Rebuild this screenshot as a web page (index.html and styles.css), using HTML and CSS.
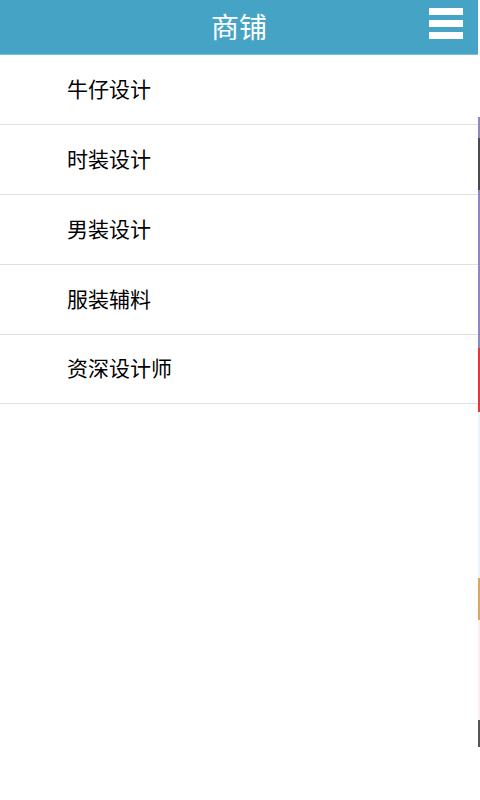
FILE: index.html
```html
<!DOCTYPE html>
<html lang="zh-CN">
<head>
  <meta charset="UTF-8">
  <meta name="viewport" content="width=device-width, initial-scale=1.0">
  <title>商铺</title>
  <link rel="stylesheet" href="styles.css">
</head>
<body>
<div class="page">
  <div class="main">
    <div class="header">
      <h1>商铺</h1>
      <div class="menu-btn">
        <span></span>
        <span></span>
        <span></span>
      </div>
    </div>
    <ul class="list">
      <li>牛仔设计</li>
      <li>时装设计</li>
      <li>男装设计</li>
      <li>服装辅料</li>
      <li>资深设计师</li>
    </ul>
  </div>
  <div class="edge">
    <div class="seg seg-white"></div>
    <div class="seg seg-purple1"></div>
    <div class="seg seg-dark1"></div>
    <div class="seg seg-purple2"></div>
    <div class="seg seg-red"></div>
    <div class="seg seg-sky"></div>
    <div class="seg seg-gold"></div>
    <div class="seg seg-pink"></div>
    <div class="seg seg-dark2"></div>
    <div class="seg seg-rest"></div>
  </div>
</div>
</body>
</html>
```

FILE: styles.css
```css
body {
  margin: 0;
  font-family: "Noto Sans CJK SC", "Noto Sans", sans-serif;
  background: #fff;
}
.page {
  display: flex;
  height: 800px;
}
.main {
  flex: 1;
}
.header {
  height: 54px;
  background-color: #45a4c6;
  border-bottom: 1px solid #7cc0d8;
  display: flex;
  align-items: center;
  justify-content: center;
  position: relative;
}
.header h1 {
  margin: 0 0 3px;
  color: #fff;
  font-size: 28px;
  font-weight: normal;
  line-height: 1;
}
.menu-btn {
  position: absolute;
  right: 15px;
  top: 8px;
  display: flex;
  flex-direction: column;
  gap: 5px;
}
.menu-btn span {
  display: block;
  width: 34px;
  height: 7px;
  background: #fff;
}
.list {
  list-style: none;
  margin: 0;
  padding: 0;
}
.list li {
  height: 66px;
  padding-bottom: 3px;
  border-bottom: 1px solid #e0e0e0;
  padding-left: 67px;
  display: flex;
  align-items: center;
  font-size: 21px;
  color: #000;
}
.list li:nth-child(n+4) {
  height: 65.5px;
}
.edge {
  width: 2px;
  display: flex;
  flex-direction: column;
}
.seg-white { height: 117px; background: #fff; }
.seg-purple1 { height: 21px; background: #8a87c4; }
.seg-dark1 { height: 52px; background: #4a4a52; }
.seg-purple2 { height: 158px; background: #8a87c4; }
.seg-red { height: 64px; background: #e8343a; }
.seg-sky { height: 166px; background: #e8f4fa; }
.seg-gold { height: 42px; background: #d8a860; }
.seg-pink { height: 100px; background: #fbeeee; }
.seg-dark2 { height: 27px; background: #555; }
.seg-rest { flex: 1; background: #fff; }
```
